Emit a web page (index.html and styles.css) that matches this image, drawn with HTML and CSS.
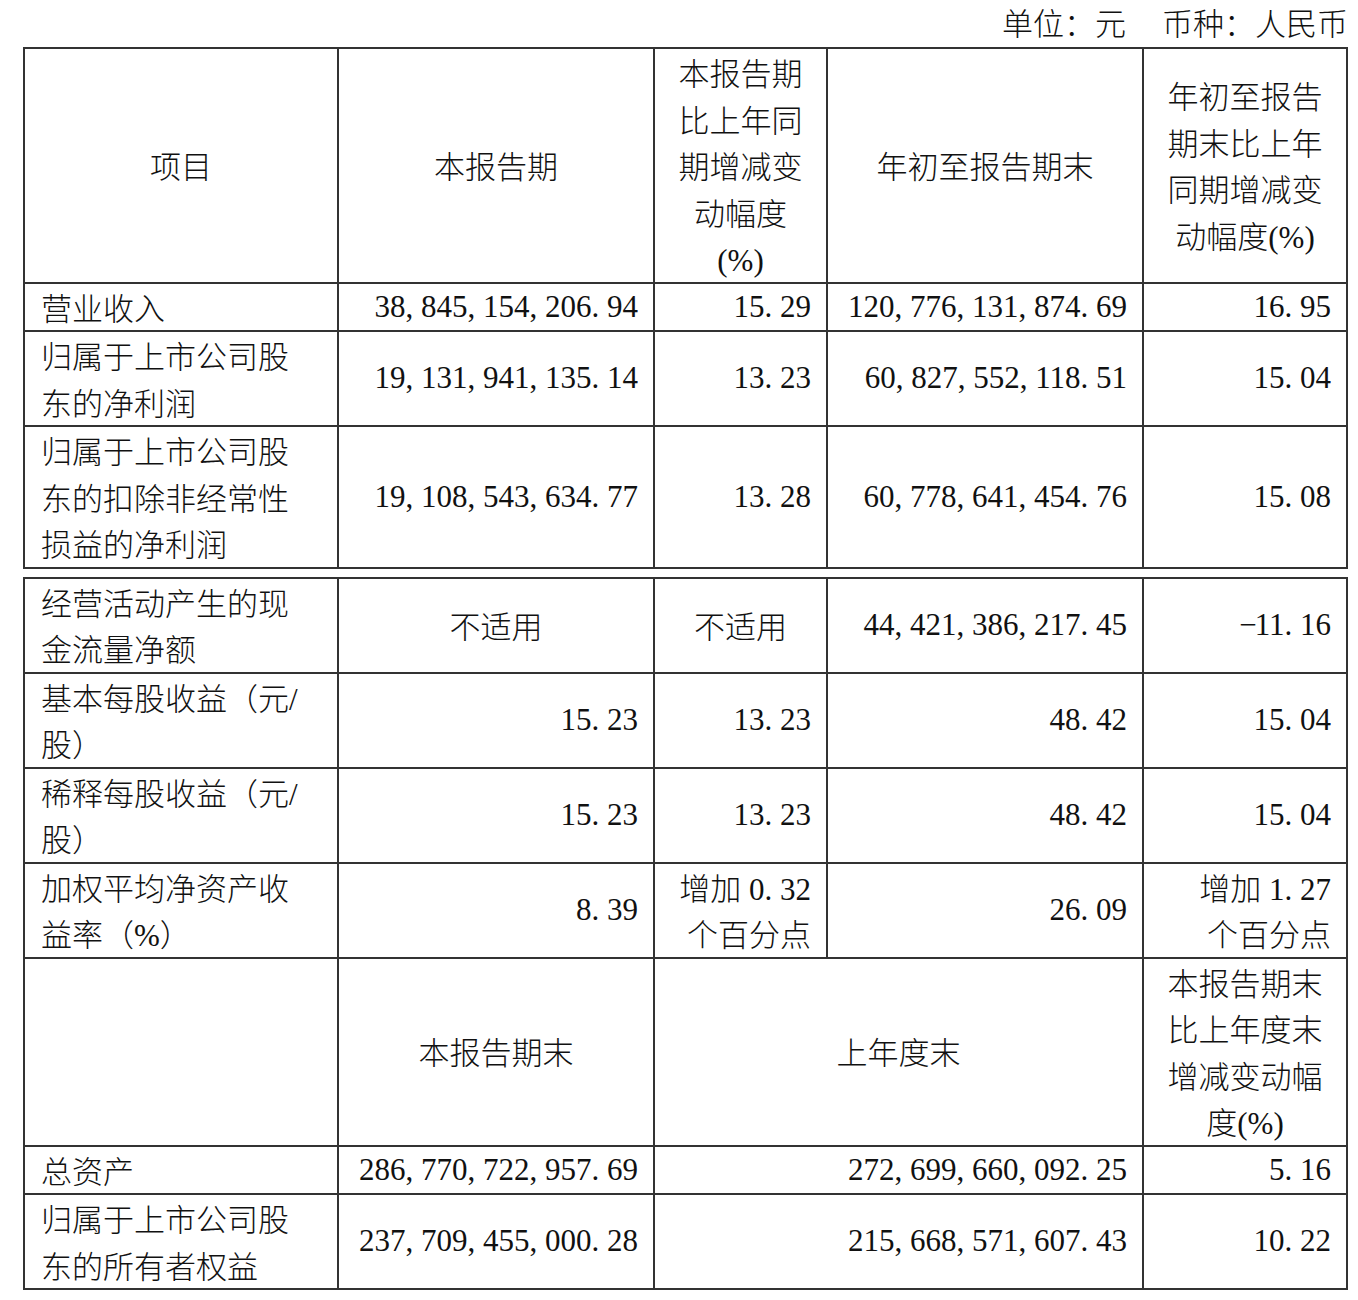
FILE: index.html
```html
<!DOCTYPE html>
<html lang="zh-CN">
<head>
<meta charset="utf-8">
<title>主要会计数据和财务指标</title>
<link rel="stylesheet" href="styles.css">
</head>
<body>
<div class="page">
  <div class="unit">单位：元<span class="gap">币种：人民币</span></div>

  <table class="fin">
    <colgroup>
      <col class="c1"><col class="c2"><col class="c3"><col class="c4"><col class="c5">
    </colgroup>
    <tr class="head">
      <td class="ctr">项目</td>
      <td class="ctr">本报告期</td>
      <td class="ctr">本报告期<br>比上年同<br>期增减变<br>动幅度<br><span class="n">(%)</span></td>
      <td class="ctr">年初至报告期末</td>
      <td class="ctr">年初至报告<br>期末比上年<br>同期增减变<br>动幅度<span class="n">(%)</span></td>
    </tr>
    <tr>
      <td>营业收入</td>
      <td class="num">38<span class="p">,</span>845<span class="p">,</span>154<span class="p">,</span>206<span class="p">.</span>94</td>
      <td class="num">15<span class="p">.</span>29</td>
      <td class="num">120<span class="p">,</span>776<span class="p">,</span>131<span class="p">,</span>874<span class="p">.</span>69</td>
      <td class="num">16<span class="p">.</span>95</td>
    </tr>
    <tr>
      <td>归属于上市公司股<br>东的净利润</td>
      <td class="num">19<span class="p">,</span>131<span class="p">,</span>941<span class="p">,</span>135<span class="p">.</span>14</td>
      <td class="num">13<span class="p">.</span>23</td>
      <td class="num">60<span class="p">,</span>827<span class="p">,</span>552<span class="p">,</span>118<span class="p">.</span>51</td>
      <td class="num">15<span class="p">.</span>04</td>
    </tr>
    <tr>
      <td>归属于上市公司股<br>东的扣除非经常性<br>损益的净利润</td>
      <td class="num">19<span class="p">,</span>108<span class="p">,</span>543<span class="p">,</span>634<span class="p">.</span>77</td>
      <td class="num">13<span class="p">.</span>28</td>
      <td class="num">60<span class="p">,</span>778<span class="p">,</span>641<span class="p">,</span>454<span class="p">.</span>76</td>
      <td class="num">15<span class="p">.</span>08</td>
    </tr>
  </table>

  <table class="fin second">
    <colgroup>
      <col class="c1"><col class="c2"><col class="c3"><col class="c4"><col class="c5">
    </colgroup>
    <tr>
      <td>经营活动产生的现<br>金流量净额</td>
      <td class="ctr">不适用</td>
      <td class="ctr">不适用</td>
      <td class="num">44<span class="p">,</span>421<span class="p">,</span>386<span class="p">,</span>217<span class="p">.</span>45</td>
      <td class="num"><span class="p">−</span>11<span class="p">.</span>16</td>
    </tr>
    <tr>
      <td>基本每股收益（元<span class="n">/</span><br>股）</td>
      <td class="num">15<span class="p">.</span>23</td>
      <td class="num">13<span class="p">.</span>23</td>
      <td class="num">48<span class="p">.</span>42</td>
      <td class="num">15<span class="p">.</span>04</td>
    </tr>
    <tr>
      <td>稀释每股收益（元<span class="n">/</span><br>股）</td>
      <td class="num">15<span class="p">.</span>23</td>
      <td class="num">13<span class="p">.</span>23</td>
      <td class="num">48<span class="p">.</span>42</td>
      <td class="num">15<span class="p">.</span>04</td>
    </tr>
    <tr>
      <td>加权平均净资产收<br>益率（<span class="n">%</span>）</td>
      <td class="num">8<span class="p">.</span>39</td>
      <td class="mixed">增加<span class="n"> 0<span class="p">.</span>32</span><br>个百分点</td>
      <td class="num">26<span class="p">.</span>09</td>
      <td class="mixed">增加<span class="n"> 1<span class="p">.</span>27</span><br>个百分点</td>
    </tr>
    <tr class="subhead">
      <td></td>
      <td class="ctr">本报告期末</td>
      <td class="ctr" colspan="2">上年度末</td>
      <td class="ctr">本报告期末<br>比上年度末<br>增减变动幅<br>度<span class="n">(%)</span></td>
    </tr>
    <tr>
      <td>总资产</td>
      <td class="num">286<span class="p">,</span>770<span class="p">,</span>722<span class="p">,</span>957<span class="p">.</span>69</td>
      <td class="num" colspan="2">272<span class="p">,</span>699<span class="p">,</span>660<span class="p">,</span>092<span class="p">.</span>25</td>
      <td class="num">5<span class="p">.</span>16</td>
    </tr>
    <tr>
      <td>归属于上市公司股<br>东的所有者权益</td>
      <td class="num">237<span class="p">,</span>709<span class="p">,</span>455<span class="p">,</span>000<span class="p">.</span>28</td>
      <td class="num" colspan="2">215<span class="p">,</span>668<span class="p">,</span>571<span class="p">,</span>607<span class="p">.</span>43</td>
      <td class="num">10<span class="p">.</span>22</td>
    </tr>
  </table>
</div>
</body>
</html>
```

FILE: styles.css
```css
body {
  margin: 0;
  background: #ffffff;
  color: #111111;
  font-family: "Noto Sans CJK SC", "Noto Sans CJK JP", sans-serif;
  font-weight: 300;
  font-size: 31px;
}

.page {
  padding: 0 10px 8px 23px;
}

.unit {
  height: 47px;
  line-height: 44px;
  text-align: right;
  white-space: nowrap;
}

.unit .gap {
  margin-left: 36px;
}

.fin {
  border-collapse: collapse;
  table-layout: fixed;
  width: 1325px;
}

.fin.second {
  margin-top: 8px;
}

.c1 { width: 314px; }
.c2 { width: 316px; }
.c3 { width: 173px; }
.c4 { width: 316px; }
.c5 { width: 204px; }

.fin td {
  border: 2px solid #333333;
  padding: 0 15px 0 16px;
  height: 44px;
  line-height: 46.5px;
  vertical-align: middle;
  text-align: left;
  white-space: nowrap;
}

.fin td.ctr {
  text-align: center;
  padding: 0 8px;
}

.fin td.num,
.fin td.mixed {
  text-align: right;
}

.fin td.num {
  font-family: "Liberation Serif", "Times New Roman", serif;
  font-weight: 400;
}

.n {
  font-family: "Liberation Serif", "Times New Roman", serif;
  font-weight: 400;
  line-height: 1;
}

.p {
  display: inline-block;
  width: 0.5em;
  line-height: 1;
  text-align: left;
}
```
